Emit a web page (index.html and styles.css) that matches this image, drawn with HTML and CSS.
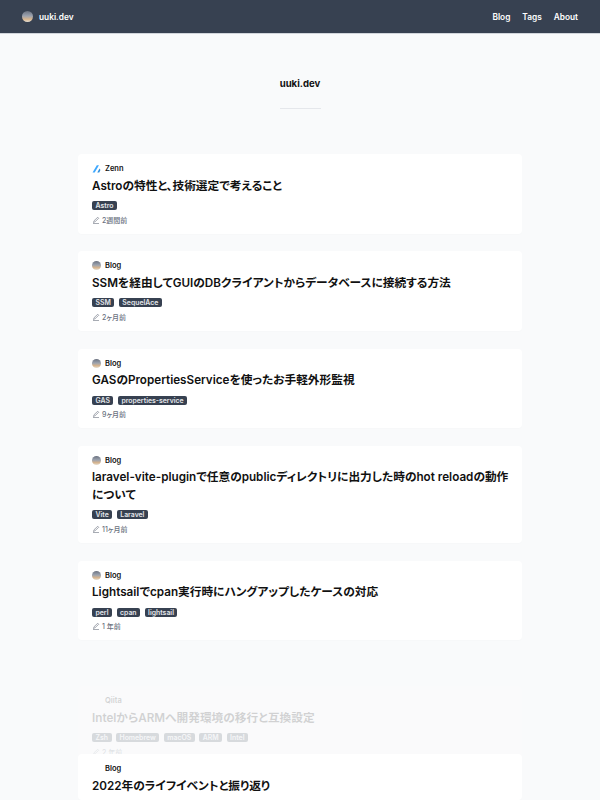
FILE: index.html
```html
<!DOCTYPE html>
<html lang="ja">

<head>
    <meta charset="UTF-8">
    <meta name="viewport" content="width=device-width, initial-scale=1.0">
    <title>uuki.dev</title>
    <link rel="stylesheet" href="styles.css">
</head>

<body>
    <header class="site-header">
        <a class="brand" href="#"><span class="avatar avatar-brand"></span>uuki.dev</a>
        <nav class="site-nav">
            <a href="#">Blog</a>
            <a href="#">Tags</a>
            <a href="#">About</a>
        </nav>
    </header>

    <main class="content">
        <div class="page-title">
            <h1>uuki.dev</h1>
            <div class="divider"></div>
        </div>

        <ul class="post-list">
            <li class="card">
                <div class="source">
                    <svg class="source-icon" viewBox="0 0 16 16"><path fill="#3ea8ff" d="M1 15 L8.6 2 H12.4 L4.8 15 Z"/><path fill="#2f8fdc" d="M9.4 15 L13.4 8 L15 10.6 L12.9 15 Z"/></svg>
                    <span>Zenn</span>
                </div>
                <h2>Astroの特性と、技術選定で考えること</h2>
                <div class="tags"><span class="tag">Astro</span></div>
                <div class="meta"><svg class="pen" viewBox="0 0 16 16"><path d="M3 13 L4 9.5 L11.5 2.5 L13.5 4.5 L6 11.5 Z M2 15 H14"/></svg>2週間前</div>
            </li>
            <li class="card">
                <div class="source"><span class="avatar"></span><span>Blog</span></div>
                <h2>SSMを経由してGUIのDBクライアントからデータベースに接続する方法</h2>
                <div class="tags"><span class="tag">SSM</span><span class="tag">SequelAce</span></div>
                <div class="meta"><svg class="pen" viewBox="0 0 16 16"><path d="M3 13 L4 9.5 L11.5 2.5 L13.5 4.5 L6 11.5 Z M2 15 H14"/></svg>2ヶ月前</div>
            </li>
            <li class="card">
                <div class="source"><span class="avatar"></span><span>Blog</span></div>
                <h2>GASのPropertiesServiceを使ったお手軽外形監視</h2>
                <div class="tags"><span class="tag">GAS</span><span class="tag">properties-service</span></div>
                <div class="meta"><svg class="pen" viewBox="0 0 16 16"><path d="M3 13 L4 9.5 L11.5 2.5 L13.5 4.5 L6 11.5 Z M2 15 H14"/></svg>9ヶ月前</div>
            </li>
            <li class="card">
                <div class="source"><span class="avatar"></span><span>Blog</span></div>
                <h2>laravel-vite-pluginで任意のpublicディレクトリに出力した時のhot reloadの動作について</h2>
                <div class="tags"><span class="tag">Vite</span><span class="tag">Laravel</span></div>
                <div class="meta"><svg class="pen" viewBox="0 0 16 16"><path d="M3 13 L4 9.5 L11.5 2.5 L13.5 4.5 L6 11.5 Z M2 15 H14"/></svg>11ヶ月前</div>
            </li>
            <li class="card">
                <div class="source"><span class="avatar"></span><span>Blog</span></div>
                <h2>Lightsailでcpan実行時にハングアップしたケースの対応</h2>
                <div class="tags"><span class="tag">perl</span><span class="tag">cpan</span><span class="tag">lightsail</span></div>
                <div class="meta"><svg class="pen" viewBox="0 0 16 16"><path d="M3 13 L4 9.5 L11.5 2.5 L13.5 4.5 L6 11.5 Z M2 15 H14"/></svg>1 年前</div>
            </li>
            <li class="card card-fading">
                <div class="source"><span class="avatar-blank"></span><span>Qiita</span></div>
                <h2>IntelからARMへ開発環境の移行と互換設定</h2>
                <div class="tags"><span class="tag">Zsh</span><span class="tag">Homebrew</span><span class="tag">macOS</span><span class="tag">ARM</span><span class="tag">Intel</span></div>
                <div class="meta"><svg class="pen" viewBox="0 0 16 16"><path d="M3 13 L4 9.5 L11.5 2.5 L13.5 4.5 L6 11.5 Z M2 15 H14"/></svg>2 年前</div>
            </li>
            <li class="card card-over">
                <div class="source"><span class="avatar-blank"></span><span>Blog</span></div>
                <h2>2022年のライフイベントと振り返り</h2>
            </li>
        </ul>
    </main>
</body>

</html>
```

FILE: styles.css
```css
* {
    box-sizing: border-box;
}

html,
body {
    height: 800px;
    overflow: hidden;
}

body {
    font-family: Inter, "Noto Sans CJK JP", sans-serif;
    font-feature-settings: "palt";
    background-color: #f9fafb;
    color: #111;
    margin: 0;
    padding: 0;
}

a {
    color: inherit;
    text-decoration: none;
}

.site-header {
    height: 34px;
    padding: 0 22px;
    display: flex;
    justify-content: space-between;
    align-items: center;
    background-color: #374151;
    border-bottom: 1px solid #d1d5db;
    color: white;
    font-size: 8.3px;
    font-weight: 600;
}

.brand {
    display: flex;
    align-items: center;
    gap: 6px;
}

.site-nav {
    display: flex;
    gap: 12px;
}

.avatar {
    display: inline-block;
    width: 9px;
    height: 9px;
    border-radius: 50%;
    background: linear-gradient(#6b7280 0%, #9ca3af 45%, #d8b48c 75%, #e5e0d5 100%);
}

.avatar-brand {
    width: 11px;
    height: 11px;
}

.avatar-blank {
    display: inline-block;
    width: 9px;
    height: 9px;
}

.page-title {
    height: 120px;
    padding-top: 43px;
    display: flex;
    flex-direction: column;
    align-items: center;
}

h1 {
    margin: 0;
    font-size: 9.6px;
    line-height: 14px;
    font-weight: 700;
}

.divider {
    width: 41px;
    height: 1px;
    margin-top: 17px;
    background-color: #e5e7eb;
}

.post-list {
    list-style: none;
    margin: 0;
    padding: 0 78px;
}

.card {
    background-color: white;
    border-radius: 4px;
    box-shadow: 0 1px 2px rgba(0, 0, 0, 0.01);
    padding: 9px 10px 8.8px 14px;
    margin-bottom: 17.5px;
}

.card-fading {
    margin-top: 46px;
    margin-bottom: 0;
    opacity: 0.17;
}

.card-over {
    position: relative;
    margin-top: -12px;
    height: 46px;
}

.source {
    display: flex;
    align-items: center;
    gap: 4px;
    height: 11px;
    font-size: 7.5px;
    font-weight: 600;
}

.source-icon {
    width: 9px;
    height: 9px;
}

h2 {
    margin: 3.5px 0 0;
    font-size: 11.7px;
    line-height: 17.5px;
    font-weight: 600;
}

.tags {
    display: flex;
    gap: 4.5px;
    margin-top: 6px;
}

.tag {
    padding: 0 3.5px;
    height: 9px;
    line-height: 9px;
    border-radius: 2px;
    background-color: #374151;
    color: #e5e7eb;
    font-size: 6.9px;
    font-weight: 600;
}

.meta {
    display: flex;
    align-items: center;
    gap: 2px;
    margin-top: 4px;
    height: 11px;
    font-size: 7px;
    font-weight: 500;
    color: #6b7280;
}

.pen {
    width: 8px;
    height: 8px;
    fill: none;
    stroke: #6b7280;
    stroke-width: 1.2;
}
```
